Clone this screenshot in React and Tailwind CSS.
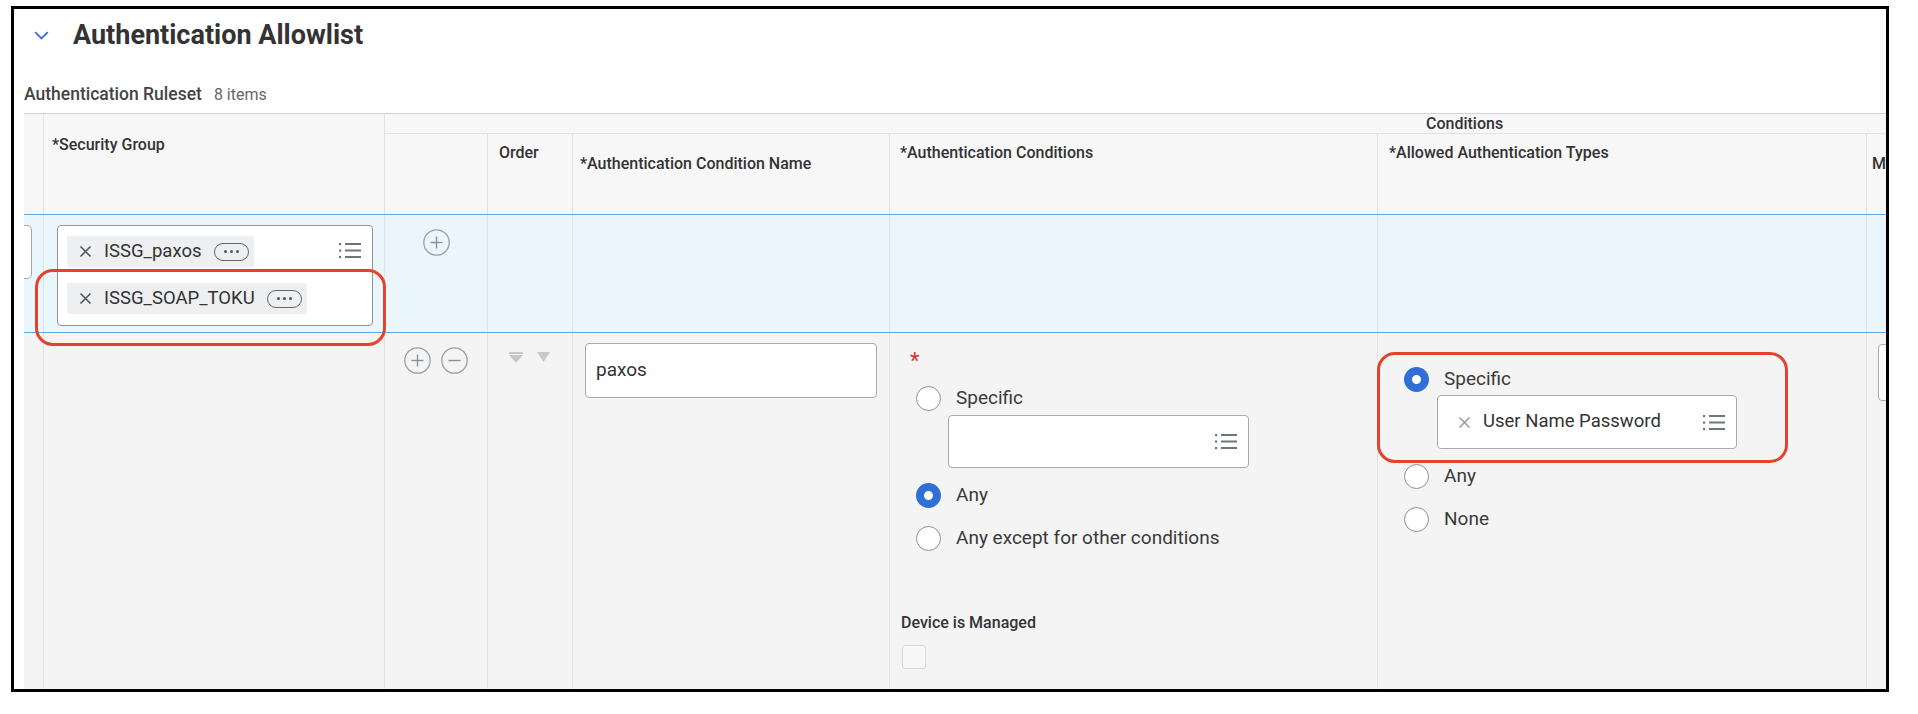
import React from 'react'

const line = 'shrink-0 border-r border-[#e0e2e4]'

function ListIcon() {
  return (
    <svg width="22" height="17" viewBox="0 0 22 17" fill="none">
      {[2, 8.5, 15].map(y => (
        <g key={y}>
          <rect x="0" y={y - 1} width="2.2" height="2.2" fill="#70757a" />
          <line x1="6" y1={y} x2="22" y2={y} stroke="#70757a" strokeWidth="2" />
        </g>
      ))}
    </svg>
  )
}

function XIcon({ color = '#555' }) {
  return (
    <svg width="13" height="13" viewBox="0 0 13 13" fill="none" className="shrink-0">
      <path d="M1.5 1.5l10 10M11.5 1.5l-10 10" stroke={color} strokeWidth="1.6" />
    </svg>
  )
}

function More() {
  return (
    <span className="w-[35px] h-[18px] rounded-full border-[1.5px] border-[#666] flex items-center justify-center gap-[3px] shrink-0">
      <span className="w-[3px] h-[3px] rounded-full bg-[#555]" />
      <span className="w-[3px] h-[3px] rounded-full bg-[#555]" />
      <span className="w-[3px] h-[3px] rounded-full bg-[#555]" />
    </span>
  )
}

function Chip({ label }) {
  return (
    <div className="inline-flex items-center h-[31px] bg-[#eeeff1] rounded-[2px] pl-[12px] pr-[5px] self-start">
      <XIcon />
      <span className="ml-[12px] text-[18.5px] text-[#333]">{label}</span>
      <span className="ml-[12px]"><More /></span>
    </div>
  )
}

function CircleBtn({ minus }) {
  return (
    <svg width="27" height="27" viewBox="0 0 27 27" fill="none">
      <circle cx="13.5" cy="13.5" r="12.7" stroke="#9aa0a6" strokeWidth="1.3" />
      <line x1="7.5" y1="13.5" x2="19.5" y2="13.5" stroke="#8a9096" strokeWidth="1.4" />
      {!minus && <line x1="13.5" y1="7.5" x2="13.5" y2="19.5" stroke="#8a9096" strokeWidth="1.4" />}
    </svg>
  )
}

function Radio({ checked, label, className = '' }) {
  return (
    <div className={`flex items-center h-[25px] gap-[15px] ${className}`}>
      {checked ? (
        <span className="w-[25px] h-[25px] rounded-full border-[8px] border-[#2f6fd6] bg-white shrink-0" />
      ) : (
        <span className="w-[25px] h-[25px] rounded-full border-[1.5px] border-[#8c9095] bg-white shrink-0" />
      )}
      <span className="text-[19px] text-[#3a3a3a]">{label}</span>
    </div>
  )
}

export default function App() {
  return (
    <div className="w-[1918px] h-[714px] bg-white pt-[6px] pl-[11px] font-[Roboto,Arial,sans-serif] text-[#333]">
      <div className="relative w-[1878px] h-[686px] border-[3px] border-black bg-white overflow-hidden">
        {/* section title */}
        <div className="flex items-center h-[32px] mt-[10px] pl-[20px]">
          <svg width="15" height="9" viewBox="0 0 15 9" fill="none">
            <path d="M1.2 1.2l6.3 6.3 6.3-6.3" stroke="#3b70d4" strokeWidth="1.8" />
          </svg>
          <h2 className="ml-[24px] text-[27px] leading-[32px] font-bold text-[#333]">Authentication Allowlist</h2>
        </div>

        <div className="mt-[33px] pl-[10px] h-[21px] leading-[21px] flex items-baseline gap-[12px]">
          <span className="text-[17.5px] font-medium text-[#444]">Authentication Ruleset</span>
          <span className="text-[16px] text-[#666]">8 items</span>
        </div>

        {/* grid */}
        <div className="mt-[8px] ml-[10px] w-[2200px]">
          {/* header */}
          <div className="flex h-[101px] border-t border-[#d4d4d4] bg-[#f7f7f7] text-[16px] leading-[20px] font-medium text-[#333]">
            <div className={`w-[20px] ${line}`} />
            <div className={`w-[341px] ${line} pt-[21px] pl-[8px]`}>*Security Group</div>
            <div className="flex flex-col w-[1782px] shrink-0">
              <div className="h-[20px] border-b border-[#e0e2e4] leading-[19px] pl-[1041px]">Conditions</div>
              <div className="flex flex-1">
                <div className={`w-[103px] ${line}`} />
                <div className={`w-[85px] ${line} pt-[9px] pl-[11px]`}>Order</div>
                <div className={`w-[317px] ${line} pt-[20px] pl-[7px]`}>*Authentication Condition Name</div>
                <div className={`w-[488px] ${line} pt-[9px] pl-[10px]`}>*Authentication Conditions</div>
                <div className={`w-[489px] ${line} pt-[9px] pl-[11px]`}>*Allowed Authentication Types</div>
                <div className={`w-[300px] ${line} pt-[20px] pl-[5px]`}>M</div>
              </div>
            </div>
          </div>

          {/* selected row */}
          <div className="flex h-[119px] border-y border-[#5ea9e2] bg-[#ebf6fc]">
            <div className={`w-[20px] ${line}`}>
              <div className="w-[8px] h-[54px] mt-[10px] bg-white border border-l-0 border-[#a3a7ab] rounded-r-[5px]" />
            </div>
            <div className={`w-[341px] ${line}`}>
              <div className="ml-[13px] mt-[10px] w-[316px] h-[101px] bg-white border border-[#8f9398] rounded-[4px] flex justify-between">
                <div className="flex flex-col gap-[16px] pt-[10px] pl-[9px]">
                  <Chip label="ISSG_paxos" />
                  <Chip label="ISSG_SOAP_TOKU" />
                </div>
                <div className="mt-[16px] mr-[11px]"><ListIcon /></div>
              </div>
            </div>
            <div className={`w-[103px] ${line} flex justify-center pt-[14px]`}>
              <div><CircleBtn /></div>
            </div>
            <div className={`w-[85px] ${line}`} />
            <div className={`w-[317px] ${line}`} />
            <div className={`w-[488px] ${line}`} />
            <div className={`w-[489px] ${line}`} />
            <div className={`w-[300px] ${line}`} />
          </div>

          {/* rule row */}
          <div className="flex h-[360px] bg-[#f4f4f4]">
            <div className={`w-[20px] ${line}`} />
            <div className={`w-[341px] ${line}`} />
            <div className={`w-[103px] ${line} flex justify-center gap-[10px] pt-[14px]`}>
              <div><CircleBtn /></div>
              <div><CircleBtn minus /></div>
            </div>
            <div className={`w-[85px] ${line} flex items-start gap-[14px] pt-[19px] pl-[21px]`}>
              <svg width="14" height="11" viewBox="0 0 14 11">
                <rect x="0" y="0" width="14" height="2" fill="#c6c9cc" />
                <path d="M0 3h14l-7 8z" fill="#c6c9cc" />
              </svg>
              <svg width="13" height="10" viewBox="0 0 13 10">
                <path d="M0 0h13l-6.5 10z" fill="#c6c9cc" />
              </svg>
            </div>
            <div className={`w-[317px] ${line}`}>
              <div className="ml-[12px] mt-[10px] w-[292px] h-[55px] bg-white border border-[#a6aaaf] rounded-[4px] flex items-center pl-[10px] text-[19px] text-[#333]">
                paxos
              </div>
            </div>
            <div className={`w-[488px] ${line} flex flex-col pt-[17px]`}>
              <div className="ml-[20px] text-[22px] leading-[22px] text-[#d9342b]">*</div>
              <Radio label="Specific" className="ml-[26px] mt-[14px]" />
              <div className="ml-[58px] mt-[4px] w-[301px] h-[53px] bg-white border border-[#a6aaaf] rounded-[4px] flex items-center justify-end pr-[11px]">
                <ListIcon />
              </div>
              <Radio checked label="Any" className="ml-[26px] mt-[15px]" />
              <Radio label="Any except for other conditions" className="ml-[26px] mt-[18px]" />
              <div className="ml-[11px] mt-[62px] text-[16px] leading-[20px] font-medium text-[#333]">Device is Managed</div>
              <div className="ml-[12px] mt-[12px] w-[24px] h-[24px] border border-[#d6d8da] rounded-[3px] bg-[#f7f7f7]" />
            </div>
            <div className={`w-[489px] ${line} flex flex-col pt-[34px]`}>
              <Radio checked label="Specific" className="ml-[26px]" />
              <div className="ml-[59px] mt-[3px] w-[300px] h-[54px] bg-white border border-[#a6aaaf] rounded-[4px] flex items-center pl-[20px] pr-[11px]">
                <XIcon color="#9a9ea3" />
                <span className="ml-[12px] text-[18.5px] text-[#333]">User Name Password</span>
                <span className="ml-auto"><ListIcon /></span>
              </div>
              <Radio label="Any" className="ml-[26px] mt-[15px]" />
              <Radio label="None" className="ml-[26px] mt-[18px]" />
            </div>
            <div className={`w-[300px] ${line}`}>
              <div className="ml-[11px] mt-[11px] w-[280px] h-[57px] bg-white border border-[#a6aaaf] rounded-[4px]" />
            </div>
          </div>
        </div>

        {/* annotation outlines */}
        <div className="absolute left-[21px] top-[260px] w-[351px] h-[77px] border-[3px] border-[#e4432b] rounded-[18px]" />
        <div className="absolute left-[1363px] top-[343px] w-[411px] h-[111px] border-[3px] border-[#e4432b] rounded-[18px]" />
      </div>
    </div>
  )
}
